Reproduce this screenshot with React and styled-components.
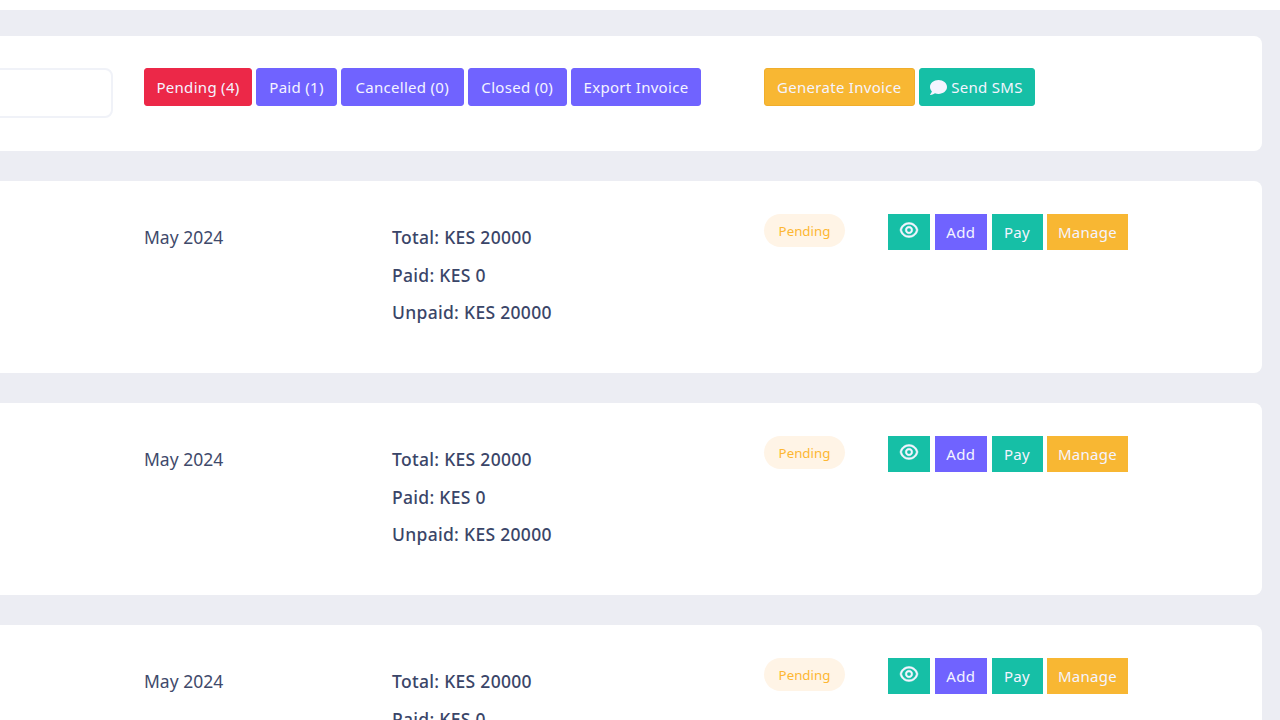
import React from 'react';
import styled, { createGlobalStyle } from 'styled-components';
import { FaComment } from 'react-icons/fa';
import { RiEyeLine } from 'react-icons/ri';

const GlobalStyle = createGlobalStyle`
  html, body {
    margin: 0;
    height: 100%;
    overflow: hidden;
    background: #ecedf3;
  }
  body {
    font-family: "Noto Sans", "Open Sans", sans-serif;
    color: #3f4a6b;
  }
`;

const Page = styled.div`
  height: 720px;
  overflow: hidden;
`;

const TopBar = styled.div`
  height: 10px;
  background: #fff;
`;

const Content = styled.div`
  display: flex;
  flex-direction: column;
  gap: 30px;
  margin: 26px 18px 0 -20px;
`;

const Card = styled.div`
  background: #fff;
  border-radius: 8px;
  padding: 32px 0 0;
  flex-shrink: 0;
`;

const FilterCard = styled(Card)`
  display: flex;
  align-items: flex-start;
  height: 115px;
  box-sizing: border-box;
`;

const SearchBox = styled.div`
  flex: none;
  width: 133px;
  height: 50px;
  box-sizing: border-box;
  margin-right: 31px;
  border: 2px solid #f0f2f8;
  border-radius: 8px;
`;

const ButtonGroup = styled.div`
  flex: none;
  display: flex;
  gap: 4px;
  width: ${({ $width }) => $width}px;
`;

const Button = styled.button`
  display: inline-flex;
  align-items: center;
  justify-content: center;
  flex: none;
  width: ${({ $width }) => $width}px;
  height: 38px;
  padding: 0;
  box-sizing: border-box;
  border: 1px solid ${({ $border, $color }) => $border || $color};
  border-radius: 3px;
  background: ${({ $color }) => $color};
  color: #f4f4ff;
  font: 400 15px "Noto Sans", sans-serif;
  letter-spacing: 0.3px;
  white-space: nowrap;
`;

const InvoiceRow = styled(Card)`
  display: grid;
  grid-template-columns: 164px 248px 372px 124px 1fr;
  align-items: start;
  height: 192px;
  padding-top: 33px;
  box-sizing: border-box;
`;

const Month = styled.div`
  grid-column: 2;
  margin-top: 11px;
  font-size: 17.5px;
  line-height: 24px;
`;

const Totals = styled.div`
  display: flex;
  flex-direction: column;
  gap: 13.5px;
  margin-top: 11px;
`;

const TotalLine = styled.div`
  font-size: 17.5px;
  line-height: 24px;
  font-weight: 500;
  letter-spacing: 0.3px;
  color: #3a4568;
`;

const Badge = styled.span`
  display: inline-flex;
  align-items: center;
  justify-content: center;
  width: 81px;
  height: 33px;
  border-radius: 17px;
  background: #fff4e6;
  color: #fdb733;
  font-size: 13.3px;
`;

const Actions = styled.div`
  display: flex;
  gap: 4.5px;
`;

const ActionButton = styled.button`
  display: inline-flex;
  align-items: center;
  justify-content: center;
  width: ${({ $width }) => $width}px;
  height: 36px;
  padding: 0;
  border: 0;
  background: ${({ $color }) => $color};
  color: #f4f4ff;
  font: 400 15px "Noto Sans", sans-serif;
  letter-spacing: 0.3px;
`;

const EyeIcon = styled(RiEyeLine)`
  width: 20px;
  height: 20px;
  margin-top: -4px;
  stroke: currentColor;
  stroke-width: 0.6px;
`;

const SmsIcon = styled(FaComment)`
  width: 17px;
  height: 17px;
  margin-right: 4px;
`;

const RED = '#ec2848';
const PURPLE = '#7063ff';
const GREEN = '#16bfa6';
const AMBER = '#f8b733';

const rows = [1, 2, 3];

const App = () => (
  <Page>
    <GlobalStyle />
    <TopBar />
    <Content>
      <FilterCard>
        <SearchBox />
        <ButtonGroup $width={620}>
          <Button $color={RED} $width={108}>Pending (4)</Button>
          <Button $color={PURPLE} $width={81}>Paid (1)</Button>
          <Button $color={PURPLE} $width={122.5}>Cancelled (0)</Button>
          <Button $color={PURPLE} $width={99.5}>Closed (0)</Button>
          <Button $color={PURPLE} $width={130}>Export Invoice</Button>
        </ButtonGroup>
        <ButtonGroup $width={271}>
          <Button $color={AMBER} $border="#f0ae2c" $width={150.5}>Generate Invoice</Button>
          <Button $color={GREEN} $width={116}><SmsIcon />Send SMS</Button>
        </ButtonGroup>
      </FilterCard>
      {rows.map((row) => (
        <InvoiceRow key={row}>
          <Month>May 2024</Month>
          <Totals>
            <TotalLine>Total: KES 20000</TotalLine>
            <TotalLine>Paid: KES 0</TotalLine>
            <TotalLine>Unpaid: KES 20000</TotalLine>
          </Totals>
          <div><Badge>Pending</Badge></div>
          <Actions>
            <ActionButton $color={GREEN} $width={42} aria-label="View"><EyeIcon /></ActionButton>
            <ActionButton $color={PURPLE} $width={52.5}>Add</ActionButton>
            <ActionButton $color={GREEN} $width={51}>Pay</ActionButton>
            <ActionButton $color={AMBER} $width={81}>Manage</ActionButton>
          </Actions>
        </InvoiceRow>
      ))}
    </Content>
  </Page>
);

export default App;
